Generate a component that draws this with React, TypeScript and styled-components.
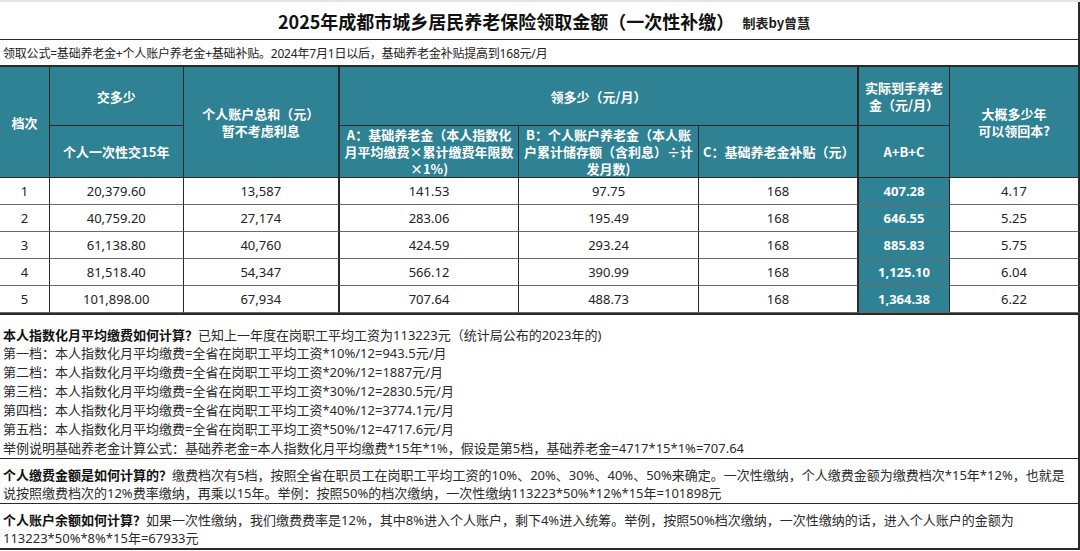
import React from "react";
import styled, { createGlobalStyle, css } from "styled-components";

const GlobalStyle = createGlobalStyle`
  html, body {
    margin: 0;
    padding: 0;
    background: #ffffff;
  }
  body {
    font-family: "Noto Sans", "Noto Sans CJK SC", sans-serif;
    color: #222;
  }
  * { box-sizing: border-box; }
`;

const TEAL = "#2f8194";
const DARK = "#2a2a2a";

const Sheet = styled.div`
  width: 1080px;
  height: 551px;
  display: flex;
  flex-direction: column;
  overflow: hidden;
  background: #fff;
`;

const TopStrip = styled.div`
  height: 2px;
  background: #e4e4e4;
`;

const TitleRow = styled.div`
  height: 38px;
  border-bottom: 1px solid ${DARK};
  border-right: 2px solid ${DARK};
  display: flex;
  align-items: center;
  justify-content: center;
  gap: 8px;
  padding-top: 1px;
  padding-left: 10px;
`;

const Title = styled.span`
  font-family: "Noto Sans CJK SC", sans-serif;
  font-weight: 700;
  font-size: 18px;
  color: #111;
`;

const Credit = styled.span`
  font-family: "Noto Sans CJK SC", sans-serif;
  font-weight: 700;
  font-size: 13px;
  color: #222;
  padding-top: 2px;
`;

const FormulaRow = styled.div`
  height: 27px;
  border-bottom: 2px solid ${DARK};
  border-right: 2px solid ${DARK};
  display: flex;
  align-items: center;
  padding-left: 3px;
  font-size: 12px;
  letter-spacing: -0.2px;
  color: #222;
  white-space: nowrap;
`;

const Grid = styled.div`
  display: grid;
  grid-template-columns: 50px 133.5px 156.5px 179px 180px 160px 91px 130px;
  grid-template-rows: 59px 52px repeat(5, 27px);
`;

type CellProps = {
  $col: string;
  $row: string;
  $thickRight?: boolean;
};

const cellBase = css<CellProps>`
  grid-column: ${(p) => p.$col};
  grid-row: ${(p) => p.$row};
  display: flex;
  align-items: center;
  justify-content: center;
  text-align: center;
  border-right: ${(p) => (p.$thickRight ? "2px" : "1px")} solid ${DARK};
`;

const HeadCell = styled.div<CellProps>`
  ${cellBase};
  background: ${TEAL};
  color: #fff;
  font-family: "Noto Sans CJK SC", sans-serif;
  font-weight: 700;
  font-size: 13px;
  line-height: 17px;
  border-bottom: 1px solid ${DARK};
  padding: 0 4px;
`;

const DataCell = styled.div<CellProps & { $accent?: boolean }>`
  ${cellBase};
  font-size: 13px;
  border-bottom: 1px solid #6a6a6a;
  background: ${(p) => (p.$accent ? TEAL : "#fff")};
  color: ${(p) => (p.$accent ? "#fff" : "#222")};
  font-weight: ${(p) => (p.$accent ? 700 : 400)};
`;

const Notes = styled.div`
  border-top: 2px solid ${DARK};
  border-right: 2px solid ${DARK};
  border-bottom: 2px solid ${DARK};
  font-size: 13px;
  line-height: 19px;
  color: #2a2a2a;
`;

const NoteSection = styled.div<{ $padTop: number; $last?: boolean }>`
  padding: ${(p) => p.$padTop}px 3px 0 3px;
  border-bottom: ${(p) => (p.$last ? "none" : `1px solid ${DARK}`)};
  white-space: nowrap;
`;

const NoteLine = styled.div`
  height: 19px;
`;

const Strong = styled.b`
  font-family: "Noto Sans CJK SC", sans-serif;
  font-weight: 700;
  color: #111;
`;

type Row = {
  tier: string;
  pay: string;
  account: string;
  a: string;
  b: string;
  c: string;
  total: string;
  years: string;
};

const rows: Row[] = [
  { tier: "1", pay: "20,379.60", account: "13,587", a: "141.53", b: "97.75", c: "168", total: "407.28", years: "4.17" },
  { tier: "2", pay: "40,759.20", account: "27,174", a: "283.06", b: "195.49", c: "168", total: "646.55", years: "5.25" },
  { tier: "3", pay: "61,138.80", account: "40,760", a: "424.59", b: "293.24", c: "168", total: "885.83", years: "5.75" },
  { tier: "4", pay: "81,518.40", account: "54,347", a: "566.12", b: "390.99", c: "168", total: "1,125.10", years: "6.04" },
  { tier: "5", pay: "101,898.00", account: "67,934", a: "707.64", b: "488.73", c: "168", total: "1,364.38", years: "6.22" },
];

const tierLines = [
  "第一档：本人指数化月平均缴费=全省在岗职工平均工资*10%/12=943.5元/月",
  "第二档：本人指数化月平均缴费=全省在岗职工平均工资*20%/12=1887元/月",
  "第三档：本人指数化月平均缴费=全省在岗职工平均工资*30%/12=2830.5元/月",
  "第四档：本人指数化月平均缴费=全省在岗职工平均工资*40%/12=3774.1元/月",
  "第五档：本人指数化月平均缴费=全省在岗职工平均工资*50%/12=4717.6元/月",
];

export default function App() {
  return (
    <>
      <GlobalStyle />
      <Sheet>
        <TopStrip />
        <TitleRow>
          <Title>2025年成都市城乡居民养老保险领取金额（一次性补缴）</Title>
          <Credit>制表by曾慧</Credit>
        </TitleRow>
        <FormulaRow>
          领取公式=基础养老金+个人账户养老金+基础补贴。2024年7月1日以后，基础养老金补贴提高到168元/月
        </FormulaRow>
        <Grid>
          <HeadCell $col="1" $row="1 / 3">档次</HeadCell>
          <HeadCell $col="2" $row="1">交多少</HeadCell>
          <HeadCell $col="2" $row="2">个人一次性交15年</HeadCell>
          <HeadCell $col="3" $row="1 / 3" $thickRight>
            个人账户总和（元）
            <br />
            暂不考虑利息
          </HeadCell>
          <HeadCell $col="4 / 7" $row="1" $thickRight>领多少（元/月）</HeadCell>
          <HeadCell $col="4" $row="2">
            A：基础养老金（本人指数化
            <br />
            月平均缴费×累计缴费年限数
            <br />
            ×1%)
          </HeadCell>
          <HeadCell $col="5" $row="2">
            B：个人账户养老金（本人账
            <br />
            户累计储存额（含利息）÷计
            <br />
            发月数)
          </HeadCell>
          <HeadCell $col="6" $row="2" $thickRight>C：基础养老金补贴（元）</HeadCell>
          <HeadCell $col="7" $row="1">实际到手养老金（元/月）</HeadCell>
          <HeadCell $col="7" $row="2">A+B+C</HeadCell>
          <HeadCell $col="8" $row="1 / 3" $thickRight>
            大概多少年
            <br />
            可以领回本?
          </HeadCell>
          {rows.map((r, i) => {
            const row = String(i + 3);
            return (
              <React.Fragment key={r.tier}>
                <DataCell $col="1" $row={row}>{r.tier}</DataCell>
                <DataCell $col="2" $row={row}>{r.pay}</DataCell>
                <DataCell $col="3" $row={row} $thickRight>{r.account}</DataCell>
                <DataCell $col="4" $row={row}>{r.a}</DataCell>
                <DataCell $col="5" $row={row}>{r.b}</DataCell>
                <DataCell $col="6" $row={row} $thickRight>{r.c}</DataCell>
                <DataCell $col="7" $row={row} $accent>{r.total}</DataCell>
                <DataCell $col="8" $row={row} $thickRight>{r.years}</DataCell>
              </React.Fragment>
            );
          })}
        </Grid>
        <Notes>
          <NoteSection $padTop={10}>
            <NoteLine>
              <Strong>本人指数化月平均缴费如何计算？</Strong>已知上一年度在岗职工平均工资为113223元（统计局公布的2023年的)
            </NoteLine>
            {tierLines.map((t) => (
              <NoteLine key={t}>{t}</NoteLine>
            ))}
            <NoteLine>
              举例说明基础养老金计算公式：基础养老金=本人指数化月平均缴费*15年*1%，假设是第5档，基础养老金=4717*15*1%=707.64
            </NoteLine>
          </NoteSection>
          <NoteSection $padTop={6}>
            <NoteLine>
              <Strong>个人缴费金额是如何计算的？</Strong>缴费档次有5档，按照全省在职员工在岗职工平均工资的10%、20%、30%、40%、50%来确定。一次性缴纳，个人缴费金额为缴费档次*15年*12%，也就是
            </NoteLine>
            <NoteLine>说按照缴费档次的12%费率缴纳，再乘以15年。举例：按照50%的档次缴纳，一次性缴纳113223*50%*12%*15年=101898元</NoteLine>
          </NoteSection>
          <NoteSection $padTop={6} $last>
            <NoteLine>
              <Strong>个人账户余额如何计算？</Strong>如果一次性缴纳，我们缴费费率是12%，其中8%进入个人账户，剩下4%进入统筹。举例，按照50%档次缴纳，一次性缴纳的话，进入个人账户的金额为
            </NoteLine>
            <NoteLine>113223*50%*8%*15年=67933元</NoteLine>
          </NoteSection>
        </Notes>
      </Sheet>
    </>
  );
}
